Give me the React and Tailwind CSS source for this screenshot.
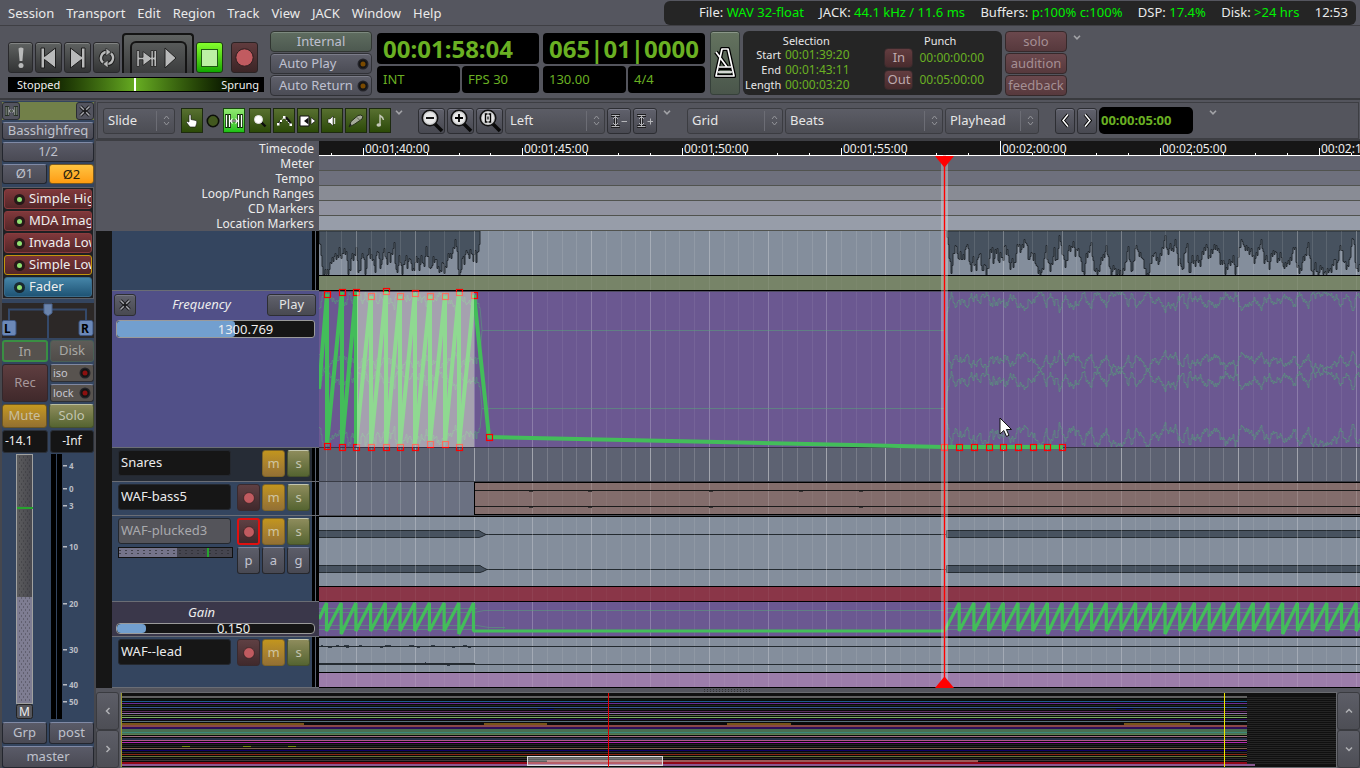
import React from "react";

/* ---------- timeline data ---------- */

const ORIGIN = 319;
const BEAT = 14.705;
const FIRST_BAR = 356.4;

const parse = (text, sx, ox) =>
  text.split(" ").map((p) => {
    const [x, y] = p.split(",").map(Number);
    return [ox + x / sx, (538 - y) / 133];
  });

const LEFT_WAVE = parse(
  "27,435 33,470 37,530 43,535 52,525 58,520 64,490 72,480 82,485 88,448 94,490 100,455 108,460 113,530 119,520 124,475 130,485 138,450 142,520 148,530 153,485 160,475 166,535 172,480 176,455 180,475 188,475 194,535 198,480 202,440 206,490 212,520 217,465 224,465 230,500 234,465 240,490 246,460 252,445 257,530 263,515 268,480 275,530 282,490 288,485 292,515 298,460 302,510 310,520 316,490 324,490 328,515 334,480 340,510 348,460 354,485 358,510 363,525 368,485 375,490 382,515 390,525 396,495 402,525 408,500 415,475 424,470 430,460 435,430 440,440 444,530 450,535 456,485 463,500 468,450 475,490 482,455 488,485 494,460 498,490 504,450 509,430",
  3,
  310
);

const RIGHT_WAVE = parse(
  "586,405 590,460 597,525 602,470 609,430 612,500 618,465 622,488 628,480 633,425 640,500 643,520 648,490 655,520 661,462 666,480 670,525 674,498 680,535 686,490 690,460 694,455 697,500 700,470 706,458 710,500 714,470 719,495 722,448 728,470 731,455 735,510 740,490 745,508 750,470 756,435 761,455 766,450 772,420 777,455 781,500 785,455 790,490 794,475 800,520 807,535 813,530 817,500 821,435 826,490 831,520 835,500 841,460 845,500 849,470 854,412 858,450 862,470 866,512 871,490 875,455 880,460 886,430 890,480 896,450 902,470 906,512 911,532 917,480 922,465 928,435 933,490 938,525 945,532 951,500 957,480 965,455 970,490 976,530 983,510 990,534 997,525 1004,534 1010,500 1016,450 1020,490 1026,525 1030,500 1036,433 1040,475 1048,470 1052,500 1060,535 1066,532 1072,490 1077,460 1082,480 1090,495 1097,460 1104,418 1110,465 1116,450 1122,460 1130,432 1135,500 1140,480 1146,535 1151,455 1157,445 1162,535 1168,485 1175,500 1180,485 1188,500 1193,475 1202,440 1208,490 1215,455 1222,450 1230,445 1236,500 1242,485 1247,530 1254,500 1262,500 1266,470 1270,538 1276,500 1283,445 1288,420 1292,460 1300,450 1310,465 1317,490 1323,470 1329,440 1334,435 1340,490 1346,485 1352,510 1358,475 1365,458 1372,500 1380,460 1385,520 1391,495 1398,500 1406,470 1413,445 1418,510 1424,530 1430,500 1437,480 1444,443 1450,500 1455,535 1461,505 1468,538 1475,510 1485,535 1492,515 1498,530 1506,485 1512,520 1518,460 1524,455 1530,500 1536,520 1542,490 1546,450 1552,412 1556,480 1560,530 1568,500",
  2.376,
  700
);

/* one column per pixel with a repeatable jitter, drawn as steps like a peak display */
const columns = (wave) => {
  const out = [];
  const last = wave[wave.length - 1][0];
  let i = 0;
  for (let x = Math.round(wave[0][0]); x <= last; x++) {
    while (i < wave.length - 2 && wave[i + 1][0] < x) i++;
    const [x0, v0] = wave[i];
    const [x1, v1] = wave[i + 1];
    const t = Math.min(1, Math.max(0, (x - x0) / (x1 - x0)));
    const jitter = (((x * 7919) % 101) / 101 - 0.5) * 0.22;
    out.push([x - ORIGIN, Math.min(1, Math.max(0.01, v0 + (v1 - v0) * t + jitter))]);
  }
  return out;
};

const LEFT_COLUMNS = columns(LEFT_WAVE);
const RIGHT_COLUMNS = columns(RIGHT_WAVE);

const edge = (cols, y) => cols.map(([x, v]) => `${x} ${Math.round(y(v)) + 0.5}h1`).join("L");

const beats = [];
for (let k = -2; k < 160; k++) {
  beats.push({ x: Math.floor(FIRST_BAR + k * BEAT) - ORIGIN + 0.5, bar: ((k % 4) + 4) % 4 === 0 });
}

function Grid({ h, y = 0, minor = 0.1, major = 0.26 }) {
  return (
    <g stroke="#fff" shapeRendering="crispEdges">
      {beats.map((b) => (
        <path key={b.x} d={`M${b.x} ${y}V${y + h}`} strokeOpacity={b.bar ? major : minor} />
      ))}
    </g>
  );
}

const Canvas = ({ h, className = "", children }) => (
  <svg width="100%" height={h} className={`block ${className}`} aria-hidden="true">
    {children}
  </svg>
);

/* ---------- lanes ---------- */

function WaveLane() {
  return (
    <div className="h-[60px] bg-[#848e9c]">
      <Canvas h={60}>
        <path d={`M0 0L${edge(LEFT_COLUMNS, (v) => 44 - v * 42)}L161 0Z`} fill="#47525f" stroke="#242b31" />
        <path d={`M628 0L${edge(RIGHT_COLUMNS, (v) => 44 - v * 42)}L3000 44V0Z`} fill="#47525f" stroke="#242b31" />
        <Grid h={44} minor={0.11} major={0.28} />
        <rect y="44" width="3000" height="16" fill="#778468" />
        <Grid h={14} y={45} minor={0.03} major={0.08} />
        <path d="M0 44.5H3000M0 59.5H3000" stroke="#000" />
      </Canvas>
    </div>
  );
}

const GHOSTS = [(v) => v * 22, (v) => 78 - v * 20, (v) => 79 + v * 22, (v) => 155 - v * 25];

const TOPS = [
  [327, 294], [342, 292], [356, 292], [371, 296], [386, 291], [400, 296],
  [415, 293], [430, 296], [445, 296], [459, 292], [474, 295],
];
const BOTTOMS = [
  [327, 446], [342, 447], [356, 447], [371, 447], [386, 447], [400, 447],
  [415, 447], [430, 444], [445, 444], [459, 447],
];
const TAIL = [[489, 437], [944, 447], [959, 447], [974, 447], [989, 447], [1003, 447], [1018, 447], [1033, 447], [1047, 447], [1062, 447]];

function FrequencyLane() {
  let d = "M0 98L8 3";
  BOTTOMS.forEach(([x, y], i) => {
    d += `L${x - ORIGIN} ${y - 293}L${TOPS[i + 1][0] - ORIGIN} ${TOPS[i + 1][1] - 291}`;
  });
  d += "L170 146L625 156H744";
  return (
    <div className="relative z-10 h-[157px] bg-[#6b5891]">
      <Canvas h={157} className="overflow-visible">
        <Grid h={157} minor={0.07} major={0.22} />
        <g fill="none" stroke="#56a878" strokeOpacity=".5">
          {GHOSTS.map((f, i) => (
            <g key={i}>
              <path d={`M${edge(LEFT_COLUMNS, f)}L163 ${i < 2 ? 39 : 117}`} />
              <path d={`M627 ${i < 2 ? 39 : 117}L${edge(RIGHT_COLUMNS, f)}`} />
            </g>
          ))}
          <path d="M163 39.5H626M163 117.5H626" />
        </g>
        <path d="M0 0.5H3000" stroke="#4e4a62" />
        <path d="M0 156.5H3000" stroke="#2a2a33" strokeOpacity=".8" />
        <path d={d} fill="none" stroke="#43bd5a" strokeWidth="4" strokeLinejoin="bevel" />
        <g fill="none" stroke="#f00" strokeWidth="1.2">
          {[...TOPS, ...BOTTOMS, ...TAIL].map(([x, y], i) => (
            <rect key={i} x={x - ORIGIN - 2.5} y={y - 291 - 2.5} width="6" height="6" />
          ))}
        </g>
        <rect x="38" y="1" width="117" height="155" fill="rgb(238,250,212)" fillOpacity=".45" />
      </Canvas>
    </div>
  );
}

function SnaresLane() {
  return (
    <div className="h-[34px] bg-[#5d6272]">
      <Canvas h={34}>
        <Grid h={33} minor={0.16} major={0.42} />
        <path d="M0 33.5H3000" stroke="#393c46" />
      </Canvas>
    </div>
  );
}

function BassLane() {
  return (
    <div className="h-[34px] bg-[#6b7182]">
      <Canvas h={34}>
        <Grid h={33} minor={0.16} major={0.42} />
        <rect x="155.5" y="0.5" width="3000" height="32" fill="#836d6c" stroke="#000" />
        <svg x="156" width="3000" height="32">
          <g transform="translate(-156 0)">
            <Grid h={31} y={1} minor={0.05} major={0.16} />
          </g>
        </svg>
        <path d="M156 8.5H3000M156 24.5H3000" stroke="#1b1b1b" />
        <path d="M210 9.5h4M269 9.5h4M210 25.5h4M269 25.5h4M390 9.5h4M390 25.5h4M480 9.5h4M540 9.5h4M540 25.5h4" stroke="#3a3434" />
        <path d="M0 33.5H3000" stroke="#4a4d55" />
      </Canvas>
    </div>
  );
}

function PluckedLane() {
  return (
    <div className="h-[86px] bg-[#848e9c]">
      <Canvas h={86}>
        <g fill="#47525f" stroke="#242b31">
          <path d="M-2 14.5H160L163 16.5L167 18.5L163 20.5L160 21.5H-2Z" />
          <path d="M-2 49.5H161L164 51.5L168 53.5L164 55.5L161 56.5H-2Z" />
          <path d="M627.5 14.5H3000V21.5H627.5Z" />
          <path d="M627.5 49.5H3000V56.5H627.5Z" />
          <path d="M166 18.5H628M167 53.5H628" />
        </g>
        <Grid h={70} minor={0.09} major={0.25} />
        <rect y="70" width="3000" height="16" fill="#8a3648" />
        <Grid h={14} y={71} minor={0.03} major={0.06} />
        <path d="M0 0.5H3000M0 70.5H3000M0 85.5H3000" stroke="#000" />
      </Canvas>
    </div>
  );
}

function GainLane() {
  let d = "M0 17L7.5 1";
  for (let i = 0; i < 10; i++) {
    const x = 7.5 + i * BEAT;
    d += `L${x} ${i % 8 === 1 || i === 9 ? 32 : 29}L${x + BEAT} 1`;
  }
  d += "L154.5 29H625.5";
  for (let i = 0; i < 90; i++) {
    const x = 625.5 + i * BEAT;
    d += `L${x} ${i % 8 === 7 ? 32 : 29}L${x + BEAT} 1`;
  }
  return (
    <div className="h-[35px] bg-[#6b5891]">
      <Canvas h={35}>
        <Grid h={35} minor={0.07} major={0.22} />
        <g stroke="#56a878" strokeOpacity=".5" fill="none">
          <path d="M0 6.5H158M0 10.5H155L165 8.5H626M0 23.5H158L170 25.5H186M0 27.5H155M628 6.5H3000M628 10.5H3000M628 23.5H3000M628 27.5H3000" />
        </g>
        <path d={d} fill="none" stroke="#43bd5a" strokeWidth="3.2" strokeLinejoin="bevel" />
        <path d="M0 34.5H3000" stroke="#2b2b30" />
      </Canvas>
    </div>
  );
}

function LeadLane() {
  return (
    <div className="h-[51px] bg-[#848e9c]">
      <Canvas h={51}>
        <Grid h={35} minor={0.09} major={0.25} />
        <path d="M0 9.5H3000M0 26.5H156M0 27.5H3000" stroke="#242b31" />
        <path d="M2 8.5h2M9 10.5h4M17 8.5h3M25 8.5h5M27 10.5h3M40 8.5h3M61 10.5h3M66 8.5h6M90 8.5h5M98 10.5h3M112 8.5h4M133 10.5h3M144 8.5h4M149 10.5h3M106 25.5h1M128 28.5h3" stroke="#2f3944" />
        <rect y="35" width="3000" height="16" fill="#9c7daa" />
        <Grid h={14} y={36} minor={0.05} major={0.12} />
        <path d="M0 0.5H3000M0 35.5H3000M0 50.5H3000" stroke="#000" />
      </Canvas>
    </div>
  );
}

/* ---------- ruler ---------- */

const RULER_LABELS = ["00:01:40:00", "00:01:45:00", "00:01:50:00", "00:01:55:00", "00:02:00:00", "00:02:05:00", "00:02:10:00"];

function Ruler() {
  const ticks = [];
  for (let i = -1; i < 60; i++) ticks.push(i);
  return (
    <div className="relative h-[15px] overflow-hidden bg-[#161616]">
      <Canvas h={15}>
        <g stroke="#fff" shapeRendering="crispEdges">
          {ticks.map((i) => {
            const x = Math.round(44 + i * 31.86) + 0.5;
            return <path key={i} d={`M${x} ${i % 5 === 0 ? (i === 20 ? 0 : 7) : 12}V15`} />;
          })}
          <path d="M0 14.5H3000" />
        </g>
      </Canvas>
      {RULER_LABELS.map((t, i) => (
        <span key={t} className="absolute top-0 text-xs leading-[15px] text-[#eee]" style={{ left: Math.round(46 + i * 159.3) }}>
          {t}
        </span>
      ))}
    </div>
  );
}

/* ---------- small controls ---------- */

const BEVEL = "rounded-[3px] border border-[#2d2e33] bg-linear-to-b from-[#60616c] to-[#484951] shadow-[inset_0_1px_0_#777885]";
const STRIP = "flex items-center justify-center overflow-hidden whitespace-nowrap rounded-[3px] border border-[#23262e] border-t-[#808aa6] bg-linear-to-b from-[#5a5b68] to-[#4a4a54] text-[13px] text-[#bfc1cc]";
const TRANSPORT = "flex h-[31px] items-center justify-center rounded-[3px] border border-[#29292c] bg-linear-to-b from-[#5f6261] to-[#333435] shadow-[inset_0_1px_0_#828483]";
const TOOL = "flex h-[25px] w-[22px] items-center justify-center border border-[#1d2a10] bg-linear-to-b from-[#587030] to-[#2c4a07]";

function Led({ ring = "#151515", core = "#7a4a00" }) {
  return (
    <svg width="12" height="12" viewBox="0 0 12 12" className="shrink-0" aria-hidden="true">
      <circle cx="6" cy="6" r="5.5" fill="#24242a" />
      <circle cx="6" cy="6" r="4.2" fill={ring} />
      <circle cx="6" cy="6" r="2.5" fill={core} />
    </svg>
  );
}

function Drop() {
  return (
    <button aria-label="More" className="flex h-3 w-3 items-center justify-center">
      <svg width="8" height="5" viewBox="0 0 8 5" fill="none" stroke="#a3a4a8" strokeWidth="1.6"><path d="M1 .8L4 3.8L7 .8" /></svg>
    </button>
  );
}

function Combo({ label, value, className }) {
  return (
    <div className={`grid h-[26px] items-stretch ${className}`}>
      <select aria-label={label} className="col-start-1 row-start-1 w-full appearance-none rounded-[3px] border border-[#3b3c41] bg-linear-to-b from-[#5c5d66] to-[#4c4d54] pl-1 text-[13px] text-[#e6e6e6]">
        <option>{value}</option>
      </select>
      <span className="pointer-events-none col-start-1 row-start-1 my-[3px] flex w-[19px] items-center justify-center justify-self-end border-l border-[#6c6d75]">
        <svg width="7" height="11" viewBox="0 0 7 11" fill="none" stroke="#94959a"><path d="M1 4L3.500 1L6 4M1 7L3.500 10L6 7" /></svg>
      </span>
    </div>
  );
}

/* ---------- header ---------- */

const Stat = ({ name, value }) => (
  <span className="whitespace-nowrap">
    {name} <span className="text-[#00f000]">{value}</span>
  </span>
);

function MenuBar() {
  return (
    <header className="flex h-[26px] items-center justify-between border-b border-[#3f3f44] bg-[#55565f] pr-1">
      <nav className="flex gap-3 pl-2 text-[13px] leading-6 text-[#eaeaea]">
        {["Session", "Transport", "Edit", "Region", "Track", "View", "JACK", "Window", "Help"].map((m) => (
          <button key={m}>{m}</button>
        ))}
      </nav>
      <div className="flex h-6 w-[692px] items-center justify-between rounded-md bg-[#252525] pr-2 pl-[35px] text-[13px] text-[#eaeaea]">
        <Stat name="File:" value="WAV 32-float" />
        <Stat name="JACK:" value="44.1 kHz / 11.6 ms" />
        <Stat name="Buffers:" value="p:100% c:100%" />
        <Stat name="DSP:" value="17.4%" />
        <Stat name="Disk:" value=">24 hrs" />
        <span>12:53</span>
      </div>
    </header>
  );
}

function BigClock({ time, left, right, label }) {
  return (
    <div className="flex w-[162px] flex-col gap-0.5 text-[#6ab023]" aria-label={label}>
      <div className="flex h-[31px] items-center rounded-sm bg-black pl-1.5 text-2xl font-bold">{time}</div>
      <div className="flex h-[27px] gap-0.5 text-[13px]">
        <div className="flex flex-1 items-center rounded-sm bg-black pl-1.5">{left}</div>
        <div className="flex w-[77px] items-center rounded-sm bg-black pl-1.5">{right}</div>
      </div>
    </div>
  );
}

function Transport() {
  const mini = "flex h-[21px] w-[102px] items-center rounded-sm border border-[#303136] bg-linear-to-b from-[#5f606b] to-[#4b4c55] pl-2 pr-0.5 text-[13px] text-[#bfc0d0] shadow-[inset_0_1px_0_#7b7c88]";
  const red = "flex items-center justify-center rounded-sm border border-[#36292b] bg-linear-to-b text-[13px]";
  return (
    <section aria-label="Transport" className="flex h-[74px] items-start border-b-2 border-[#393a3e] bg-[#54555d] pl-2 pt-[5px]">
      <div className="flex w-[256px] flex-col gap-1 pt-0.5">
        <div className="flex h-10 items-end gap-0.5">
          <button aria-label="MIDI panic" className={`${TRANSPORT} w-[25px]`}>
            <svg width="8" height="22" viewBox="0 0 8 22" fill="#b9baba"><path d="M1.500 1.500Q4-.5 6.500 1.500L5.400 14H2.600Z" /><circle cx="4" cy="18.500" r="2.500" /></svg>
          </button>
          <button aria-label="Go to start" className={`${TRANSPORT} w-[27px]`}>
            <svg width="17" height="22" viewBox="0 0 17 22" fill="#b9baba" stroke="#1f1f1f"><path d="M1 1H4.500V9.500L15.500 1V21L4.500 12.500V21H1Z" /></svg>
          </button>
          <button aria-label="Go to end" className={`${TRANSPORT} w-[27px]`}>
            <svg width="17" height="22" viewBox="0 0 17 22" fill="#b9baba" stroke="#1f1f1f"><path d="M16 1H12.500V9.500L1.500 1V21L12.500 12.500V21H16Z" /></svg>
          </button>
          <button aria-label="Loop" className={`${TRANSPORT} w-[27px]`}>
            <svg width="18" height="20" viewBox="0 0 18 20" fill="none">
              <g stroke="#1f1f1f" strokeWidth="4.400"><path d="M5 14.500A6 6 0 0 1 9 4M13 5.500A6 6 0 0 1 9 16" /></g>
              <g stroke="#b9baba" strokeWidth="2.400"><path d="M5 14.500A6 6 0 0 1 9 4M13 5.500A6 6 0 0 1 9 16" /></g>
              <path d="M8 0L13 4L8 8ZM10 12L5 16L10 20Z" fill="#b9baba" stroke="#1f1f1f" strokeWidth=".7" />
            </svg>
          </button>
          <div className="flex h-10 w-[72px] items-end justify-center rounded-t-sm border-2 border-b-0 border-[#141414] bg-linear-to-b from-[#5f6261] to-[#3c3d3e]">
            <div className="flex h-8 w-[57px] items-center justify-between rounded-t-md border-2 border-b-0 border-[#141414] pr-2 pl-1">
              <button aria-label="Play selection">
                <svg width="21" height="17" viewBox="0 0 21 17" fill="#b9baba" stroke="#1f1f1f" strokeWidth=".8"><path d="M.8 .5H3.300V7.300H7V1.500L15 7.500V.5H17.300V7.300H18V.5H20.500V16.500H18V9.700H17.300V16.500H15V9.500L7 15.500V9.700H3.300V16.500H.8Z" /></svg>
              </button>
              <button aria-label="Play">
                <svg width="13" height="22" viewBox="0 0 13 22" fill="#b9baba" stroke="#1f1f1f"><path d="M1 1L12 11L1 21Z" /></svg>
              </button>
            </div>
          </div>
          <button aria-label="Stop" className="flex h-[31px] w-[27px] items-center justify-center rounded-[3px] border border-[#1b3a10] bg-linear-to-b from-[#83ff2c] to-[#0aa800]">
            <svg width="17" height="18" viewBox="0 0 17 18"><rect x=".5" y=".5" width="16" height="17" fill="#bdf0a4" stroke="#1e5a12" /></svg>
          </button>
          <button aria-label="Record" className="ml-1.5 flex h-[31px] w-[27px] items-center justify-center rounded-[3px] border border-[#2a2223] bg-linear-to-b from-[#613c3e] to-[#3c2526]">
            <svg width="19" height="19" viewBox="0 0 19 19"><circle cx="9.500" cy="9.500" r="8.700" fill="#c15b60" stroke="#2a1c1d" /></svg>
          </button>
        </div>
        <div className="grid h-[15px] grid-cols-2 items-center border border-black bg-linear-to-r from-black via-[#67ad22] to-black text-[11px] leading-[13px] text-[#f0f0f0]">
          <span className="h-full border-r-2 border-white pl-2">Stopped</span>
          <span className="pr-1 text-right">Sprung</span>
        </div>
      </div>

      <div className="ml-1.5 flex flex-col gap-px">
        <button className="flex h-[21px] w-[102px] items-center justify-center rounded-sm border border-[#303531] bg-linear-to-b from-[#5f6d60] to-[#4d5950] text-[13px] text-[#bfc0d0] shadow-[inset_0_1px_0_#7d8a7f]">Internal</button>
        <button className={mini}><span className="flex-1 text-left">Auto Play</span><Led /></button>
        <button className={mini}><span className="flex-1 text-left">Auto Return</span><Led /></button>
      </div>

      <div className="ml-[5px] flex gap-1 pt-0.5">
        <BigClock label="Primary clock" time="00:01:58:04" left="INT" right="FPS 30" />
        <BigClock label="Secondary clock" time="065|01|0000" left="130.00" right="4/4" />
      </div>

      <button aria-label="Metronome" className="ml-[5px] flex h-16 w-[30px] items-center justify-center rounded-[3px] border border-[#36403a] bg-linear-to-b from-[#64735f] to-[#4a564b] shadow-[inset_0_1px_0_#8a9788]">
        <svg width="22" height="32" viewBox="0 0 22 32" fill="none" strokeLinejoin="round">
          <g stroke="#000" strokeWidth="4.200"><path d="M2 29L8 2H14L20 29ZM5 21H17M2 5L13 20" /></g>
          <g stroke="#fff" strokeWidth="1.700"><path d="M2 29L8 2H14L20 29ZM5 20H17M4 25H18M2 5L13 20" /></g>
        </svg>
      </button>

      <div className="ml-[3px] flex h-16 w-[259px] rounded-md bg-[#252525] pl-0.5 pr-[18px] text-xs text-[#e8e8e8]">
        <div className="flex flex-col">
          <div className="pl-[18px] pt-[3px] text-center text-[11px] leading-[13px]">Selection</div>
          <dl className="grid grid-cols-[36px_auto] gap-x-1 leading-[15px]">
            {[["Start", "00:01:39:20"], ["End", "00:01:43:11"], ["Length", "00:00:03:20"]].map(([k, v]) => (
              <React.Fragment key={k}>
                <dt className="text-right text-[11px]">{k}</dt>
                <dd className="text-xs leading-[15px] text-[#6ab023]">{v}</dd>
              </React.Fragment>
            ))}
          </dl>
        </div>
        <div className="ml-auto flex flex-col">
          <div className="pl-3 pt-[3px] text-center text-[11px] leading-[13px]">Punch</div>
          {[["In", "00:00:00:00"], ["Out", "00:05:00:00"]].map(([k, v]) => (
            <div key={k} className="flex h-[22px] items-center gap-1.5">
              <button className={`${red} h-5 w-[29px] from-[#633d40] to-[#482b2d] text-[#bfaaae]`}>{k}</button>
              <span className="text-[#6ab023]">{v}</span>
            </div>
          ))}
        </div>
      </div>

      <div className="ml-[3px] flex flex-col gap-px">
        {["solo", "audition", "feedback"].map((t) => (
          <button key={t} className={`${red} h-[21px] w-[62px] from-[#6b484d] to-[#57393d] text-[#a58f94]`}>{t}</button>
        ))}
      </div>
      <span className="ml-1"><Drop /></span>
    </section>
  );
}

function MagIcon({ children }) {
  return (
    <svg width="24" height="24" viewBox="0 0 24 24" fill="none">
      <path d="M14 14L22 22" stroke="#0a0a0a" strokeWidth="3.600" />
      <circle cx="10" cy="9" r="7.700" fill="#c9cacb" stroke="#111" strokeWidth="1.600" />
      <circle cx="10" cy="9" r="5.800" fill="#e8e8e8" />
      <g stroke="#000" strokeWidth="1.800">{children}</g>
    </svg>
  );
}

function TrackHeightIcon({ plus }) {
  return (
    <svg width="18" height="14" viewBox="0 0 18 14" fill="none" stroke="#1d1d1f" strokeWidth="2.800">
      <path d="M1 1.500H10M1 12.500H10M5.500 2V12" />
      <g stroke="#b4b5b9" strokeWidth="1"><path d="M1.500 1.500H9.500M1.500 12.500H9.500M5.500 2V12M3 5L5.500 2.500L8 5M3 9L5.500 11.500L8 9M11.500 7.500H17" />{plus && <path d="M14.500 4.500V10.500" />}</g>
    </svg>
  );
}

function RangeIcon({ color = "#fff", width = 18, height = 14 }) {
  return (
    <svg width={width} height={height} viewBox="0 0 18 14" fill="none" className="shrink-0">
      <path d="M1.500 0V14M4.500 0V14M13.500 0V14M16.500 0V14M4 7H14" stroke="#0a1a05" strokeWidth="2.600" />
      <path d="M1.500 1V13M4.500 1V13M13.500 1V13M16.500 1V13M5 7H13M7.500 4.500L5.500 7L7.500 9.500M10.500 4.500L12.500 7L10.500 9.500" stroke={color} strokeWidth="1.200" />
    </svg>
  );
}

function EditBar() {
  return (
    <section aria-label="Edit tools" className="m-px mb-0 flex h-[37px] items-center border border-[#3d3e43] pl-[5px]">
      <Combo label="Edit mode" value="Slide" className="w-[72px]" />
      <div className="ml-1.5 flex items-center gap-0.5">
        <button aria-label="Grab tool" className={TOOL}>
          <svg width="12" height="14" viewBox="0 0 12 14" fill="#fff"><path d="M3 1Q4 0 5 1V5.500L10 6.500Q11 7 10.800 9L9.500 13H4L.5 8.500Q1 7 3 8Z" stroke="#111" strokeWidth=".6" /></svg>
        </button>
        <button aria-label="Smart mode" className="flex w-4 justify-center">
          <svg width="14" height="14" viewBox="0 0 14 14"><circle cx="7" cy="7" r="5.700" fill="#42581f" stroke="#0c0f08" strokeWidth="1.600" /></svg>
        </button>
        <button aria-label="Range tool" className="mr-0.5 flex h-[25px] w-[22px] items-center justify-center border border-[#174a0c] bg-linear-to-b from-[#8ee86f] to-[#19c212]"><RangeIcon /></button>
        <button aria-label="Zoom tool" className={TOOL}>
          <svg width="14" height="14" viewBox="0 0 14 14"><path d="M7 7L12.500 12.500" stroke="#0d0d0d" strokeWidth="2.400" /><circle cx="5.500" cy="5.500" r="4" fill="#fff" stroke="#e0e0e0" /></svg>
        </button>
        <button aria-label="Gain tool" className={TOOL}>
          <svg width="17" height="12" viewBox="0 0 17 12" fill="none"><path d="M2 9L5 6M8.500 2.500L10.500 3L13 6L15 10" stroke="#111" strokeWidth="2.400" /><path d="M2 9L8 2.500L14.500 9.500" stroke="#fff" strokeDasharray="2 1" /><path d="M1 8h2.500v2.500H1zM7 1h2.500v2.500H7zM13.500 8.500h2.500v2.500h-2.500zM4 5h2v2H4z" fill="#fff" /></svg>
        </button>
        <button aria-label="Stretch tool" className={TOOL}>
          <svg width="18" height="12" viewBox="0 0 18 12"><path d="M1 1H10V11H1Z" fill="#fff" stroke="#111" /><path d="M5 6L9.500 2.500V9.500Z" fill="#111" /><path d="M16.500 6L12 2.500V9.500Z" fill="#fff" stroke="#111" strokeWidth=".7" /></svg>
        </button>
        <button aria-label="Audition tool" className={TOOL}>
          <svg width="10" height="12" viewBox="0 0 10 12" fill="#fff"><path d="M1 4H3L6 1V11L3 8H1Z" stroke="#111" strokeWidth=".5" /><path d="M7.500 3V9" stroke="#ddd" strokeWidth="1.400" /></svg>
        </button>
        <button aria-label="Draw tool" className={TOOL}>
          <svg width="16" height="14" viewBox="0 0 16 14"><path d="M1 13L3 7.500L10 1.500Q13 0 15 2.500L14 5L6 10.500Z" fill="#a6aa9a" stroke="#26301a" /><path d="M1 13L3.500 11L2.500 9.500Z" fill="#111" /><path d="M9 3.500L12 6.500" stroke="#5a5f50" /></svg>
        </button>
        <button aria-label="Edit notes" className={TOOL}>
          <svg width="9" height="14" viewBox="0 0 9 14"><path d="M4 11V1.500Q7 3 7.500 6" fill="none" stroke="#c4c8b8" strokeWidth="1.400" /><ellipse cx="2.800" cy="11" rx="2.300" ry="1.800" fill="#c4c8b8" /></svg>
        </button>
      </div>
      <span className="mb-4 ml-0.5"><Drop /></span>

      <div className="ml-[13px] flex items-center gap-0.5">
        <button aria-label="Zoom out" className={`${BEVEL} flex h-[26px] w-[27px] items-center justify-center`}><MagIcon><path d="M6 9H14" /></MagIcon></button>
        <button aria-label="Zoom in" className={`${BEVEL} flex h-[26px] w-[27px] items-center justify-center`}><MagIcon><path d="M6 9H14M10 5V13" /></MagIcon></button>
        <button aria-label="Zoom to session" className={`${BEVEL} flex h-[26px] w-[27px] items-center justify-center`}><MagIcon><path d="M9.500 5H7.500V13H9.500M10.500 5H12.500V13H10.500" strokeWidth="1.400" /><path d="M10 7.500V10.500" strokeWidth="1.200" /></MagIcon></button>
        <Combo label="Zoom focus" value="Left" className="w-[100px]" />
        <button aria-label="Shrink tracks" className={`${BEVEL} flex h-[26px] w-6 items-center justify-center`}><TrackHeightIcon /></button>
        <button aria-label="Expand tracks" className={`${BEVEL} flex h-[26px] w-6 items-center justify-center`}><TrackHeightIcon plus /></button>
      </div>
      <span className="mb-4 ml-1"><Drop /></span>

      <div className="ml-3.5 flex items-center gap-0.5">
        <Combo label="Snap mode" value="Grid" className="w-[96px]" />
        <Combo label="Snap to" value="Beats" className="w-[158px]" />
        <Combo label="Edit point" value="Playhead" className="w-[94px]" />
      </div>
      <div className="ml-4 flex items-center gap-0.5">
        <button aria-label="Nudge back" className={`${BEVEL} flex h-[26px] w-5 items-center justify-center`}>
          <svg width="9" height="15" viewBox="0 0 9 15" fill="none"><path d="M7 1.500L2 7.500L7 13.500" stroke="#000" strokeWidth="3.400" /><path d="M7 1.500L2 7.500L7 13.500" stroke="#fff" strokeWidth="1.500" /></svg>
        </button>
        <button aria-label="Nudge forward" className={`${BEVEL} flex h-[26px] w-5 items-center justify-center`}>
          <svg width="9" height="15" viewBox="0 0 9 15" fill="none"><path d="M2 1.500L7 7.500L2 13.500" stroke="#000" strokeWidth="3.400" /><path d="M2 1.500L7 7.500L2 13.500" stroke="#fff" strokeWidth="1.500" /></svg>
        </button>
        <div className="flex h-[27px] w-[94px] items-center rounded-[5px] bg-black pl-0.5 text-[13px] font-bold text-[#6ab023]">00:00:05:00</div>
      </div>
      <span className="mb-4 ml-3.5"><Drop /></span>
    </section>
  );
}

/* ---------- mixer strip ---------- */

const SCALE = [["4", 466], ["0", 489], ["3", 506], ["10", 547], ["20", 604], ["30", 650], ["40", 685], ["50", 702]];

const CrossIcon = ({ size = 12 }) => (
  <svg width={size} height={size} viewBox="0 0 12 12" fill="none">
    <path d="M1.500 1.500L10.500 10.500M10.500 1.500L1.500 10.500" stroke="#1c1c1e" strokeWidth="3.400" />
    <path d="M1.500 1.500L4.800 4.800M7.200 7.200L10.500 10.500M10.500 1.500L7.200 4.800M4.800 7.200L1.500 10.500" stroke="#a9aab0" strokeWidth="1.400" />
  </svg>
);

function Processor({ name, kind }) {
  const look =
    kind === "fader"
      ? "border-[#3a6b8a] bg-linear-to-b from-[#4585a8] to-[#1f5475]"
      : kind === "selected"
      ? "border-[#c2950c] bg-linear-to-b from-[#7a3436] to-[#532628]"
      : "border-[#8a3c3e] bg-linear-to-b from-[#80383b] to-[#542628]";
  return (
    <button className={`flex h-5 w-full shrink-0 items-center gap-[3px] overflow-hidden rounded-[3px] border pl-2 text-[13px] whitespace-nowrap text-[#eee] ${look}`}>
      <svg width="13" height="13" viewBox="0 0 13 13" className="shrink-0"><circle cx="6.500" cy="6.500" r="5.500" fill="#111" fillOpacity=".75" /><circle cx="6.500" cy="6.500" r="2.500" fill="#8fe070" /></svg>
      {name}
    </button>
  );
}

function MixerStrip() {
  const pair = "flex gap-0.5";
  return (
    <aside aria-label="Mixer strip" className="flex w-24 shrink-0 flex-col border-r-2 border-l-2 border-[#46474d] bg-[#34455f] pt-px text-[13px]">
      <div className="flex h-[18px] justify-between bg-[#728049]">
        <button aria-label="Strip width" className="flex w-[18px] items-center justify-center rounded-[3px] border border-[#2a2c33] bg-[#53545f]"><RangeIcon color="#b4b5ba" width={13} height={10} /></button>
        <button aria-label="Close strip" className="flex w-[18px] items-center justify-center rounded-[3px] border border-[#2a2c33] bg-[#53545f]"><CrossIcon /></button>
      </div>
      <button className={`${STRIP} mt-0.5 h-[18px]`}>Basshighfreq</button>
      <button className={`${STRIP} mt-0.5 h-5`}>1/2</button>
      <div className={`${pair} mt-0.5 h-5`}>
        <button className={`${STRIP} flex-1`}>Ø1</button>
        <button className="flex-1 rounded-[3px] border border-[#7a5a20] bg-linear-to-b from-[#ffc43f] to-[#ff9c0e] text-[#26200e]">Ø2</button>
      </div>
      <div className="mt-[3px] flex h-28 flex-col gap-0.5 border border-[#5b5f66] bg-[#1f2023] p-px">
        <Processor name="Simple Hig" />
        <Processor name="MDA Imag" />
        <Processor name="Invada Low" />
        <Processor name="Simple Low" kind="selected" />
        <Processor name="Fader" kind="fader" />
      </div>
      <svg width="92" height="35" viewBox="0 0 92 35" className="mt-1 block" role="img" aria-label="Panner">
        <rect width="92" height="35" fill="#2c2827" />
        <path d="M46 12V35M7 18V6.500H84V18" fill="none" stroke="#34496a" strokeWidth="2" />
        <path d="M42 1H50V10L46 13L42 10Z" fill="#6a84ad" stroke="#4a6490" />
        <rect x="0" y="17.500" width="14" height="15" rx="2" fill="#6b88b8" stroke="#3d5580" />
        <rect x="77" y="17.500" width="14" height="15" rx="2" fill="#6b88b8" stroke="#3d5580" />
        <text x="2" y="30" fontSize="12" fontWeight="bold" fill="#000">L</text>
        <text x="79" y="30" fontSize="12" fontWeight="bold" fill="#000">R</text>
      </svg>
      <div className={`${pair} mt-0.5 h-[22px]`}>
        <button className="flex-1 rounded-[3px] border-2 border-[#3a8f43] bg-[#56524e] text-[#a9a8a4]">In</button>
        <button className="flex-1 rounded-[3px] border border-[#4a5f56] bg-linear-to-b from-[#5e5c58] to-[#504c49] text-[#a9a8a4]">Disk</button>
      </div>
      <div className={`${pair} mt-0.5 h-[38px]`}>
        <button className="flex-1 rounded-[3px] border border-[#33272b] bg-linear-to-b from-[#5f3e40] to-[#40292b] text-[#a7979a]">Rec</button>
        <div className="flex flex-1 flex-col justify-between text-[11px]">
          {["iso", "lock"].map((t) => (
            <button key={t} className="flex h-[18px] items-center justify-between rounded-[3px] border border-[#2d2e33] border-t-[#8088a0] bg-[#58534f] pr-0.5 pl-0.5 text-[#c6c6d0]">{t}<Led core="#8c1010" /></button>
          ))}
        </div>
      </div>
      <div className={`${pair} mt-0.5 h-6`}>
        <button className="flex-1 rounded-[3px] border border-[#6b5522] bg-linear-to-b from-[#c5981f] to-[#93702f] text-[#c9bf9f]">Mute</button>
        <button className="flex-1 rounded-[3px] border border-[#46502c] border-t-[#b9bda0] bg-linear-to-b from-[#8e8c5c] to-[#556431] text-[#c3c5b0]">Solo</button>
      </div>
      <div className={`${pair} mt-0.5 h-[23px] text-xs`}>
        <input aria-label="Gain" defaultValue="-14.1" className="w-0 flex-1 rounded-[3px] border border-[#2a2f38] bg-[#151515] pb-0.5 pl-0.5 text-[#eee]" />
        <button className="flex-1 rounded-[3px] border border-[#2a2f38] bg-[#151515] pb-0.5 text-[#eee]">-Inf</button>
      </div>
      <svg width="92" height="266" viewBox="0 453 92 266" className="block" role="img" aria-label="Fader and level meter">
        <defs>
          <pattern id="dots" width="8" height="6" patternUnits="userSpaceOnUse">
            <path d="M1 1h1M3 4h1M5 1h1M7 4h1" stroke="#2a2a30" strokeOpacity=".7" />
          </pattern>
          <linearGradient id="slot" x1="0" x2="1"><stop offset="0" stopColor="#5c5c5e" /><stop offset="1" stopColor="#48484e" /></linearGradient>
        </defs>
        <rect x="14.500" y="454.500" width="16" height="249" fill="url(#slot)" stroke="#a0a1a0" />
        <rect x="15" y="597" width="15" height="106" fill="#7e7d92" />
        <rect x="16" y="456" width="13" height="246" fill="url(#dots)" />
        <rect x="15" y="507" width="16" height="2" fill="#27a52e" />
        <rect x="49" y="454" width="11" height="265" fill="#000" />
        <path d="M54.500 454V719" stroke="#34455f" />
        <g fontSize="8" fontWeight="bold" fill="#b9bcc4">
          {SCALE.map(([t, y]) => (
            <g key={t}>
              <rect x="61" y={y - 1} width="4" height="1.500" />
              <text x="67" y={y + 3}>{t}</text>
            </g>
          ))}
        </g>
        <rect x="14.500" y="704.500" width="16" height="14" rx="2" fill="#55565c" stroke="#222" />
        <text x="17" y="716" fontSize="12" fill="#eee">M</text>
      </svg>
      <div className={`${pair} mt-[3px] h-[22px]`}>
        <button className={`${STRIP} flex-1`}>Grp</button>
        <button className={`${STRIP} flex-1`}>post</button>
      </div>
      <button className={`${STRIP} mt-0.5 h-[22px]`}>master</button>
    </aside>
  );
}

/* ---------- track headers ---------- */

function Btn({ kind, children, label }) {
  const looks = {
    rec: "border-[#3a2a2e] bg-linear-to-b from-[#5f4043] to-[#40292c]",
    armed: "border-2 border-[#e01010] bg-linear-to-b from-[#5f4043] to-[#40292c]",
    mute: "border-[#7d6427] bg-linear-to-b from-[#c2951d] to-[#937034] text-[#cfc4a0]",
    solo: "border-[#46502c] border-t-[#c3c6ae] bg-linear-to-b from-[#8e8c5c] to-[#556431] text-[#c3c5b0]",
    grey: "border-[#26272c] border-t-[#7c86a0] bg-linear-to-b from-[#5c5d69] to-[#484953] text-[#c3c4d0]",
  };
  return (
    <button aria-label={label} className={`flex h-[27px] w-[23px] items-center justify-center rounded-[3px] border text-[13px] ${looks[kind]}`}>
      {children || <svg width="12" height="12" viewBox="0 0 12 12"><circle cx="6" cy="6" r="5.400" fill="#c15b60" stroke="#2a1c1d" strokeWidth=".6" /></svg>}
    </button>
  );
}

function TrackHeader({ name, height, rec, dim, bg = "bg-[#34455f]", children }) {
  return (
    <div className={`flex border-b border-[#6a6d75] ${height} ${bg}`}>
      <div className="flex flex-1 flex-col gap-0.5 pt-0.5 pl-1.5">
        {name && (
          <div className="flex items-start gap-0.5">
            <input
              aria-label="Track name"
              defaultValue={name}
              className={`mr-1 h-[26px] w-[113px] rounded-[3px] border border-[#24282f] px-0.5 pb-0.5 text-[13px] ${dim ? "bg-[#54545a] text-[#a9a9ad]" : "bg-[#161616] text-[#ececec]"}`}
            />
            {rec ? <Btn kind={rec} label="Record arm" /> : <span className="w-[23px]" />}
            <Btn kind="mute">m</Btn>
            <Btn kind="solo">s</Btn>
          </div>
        )}
        {children}
      </div>
      <div className="flex w-[7px] justify-center bg-black"><span className="w-px bg-[#5b6472]" /></div>
    </div>
  );
}

function Headers() {
  return (
    <div className="flex">
      <div className="w-4 shrink-0 bg-[#161616]" />
      <div className="min-w-0 flex-1">
        <TrackHeader height="h-[60px]" />
        <div className="flex h-[157px] flex-col gap-[3px] border-b border-[#6a6d75] bg-[#515088] pt-0.5">
          <div className="flex h-6 items-center justify-between pr-[3px] pl-0.5">
            <button aria-label="Hide lane" className={`${BEVEL} flex h-[22px] w-[22px] items-center justify-center`}><CrossIcon /></button>
            <span className="text-[13px] text-[#ececec] italic">Frequency</span>
            <button className={`${BEVEL} h-[22px] w-[49px] text-[13px] text-[#e4e4e4]`}>Play</button>
          </div>
          <div className="mx-1 grid h-[18px] items-center rounded-[3px] border border-[#9a9a9a] bg-[#151515] text-center text-[13px] leading-4 text-[#eee]">
            <div className="col-start-1 row-start-1 h-full w-3/5 rounded-[3px] bg-[#729fcf]" />
            <div className="col-start-1 row-start-1 pl-[60px]">1300.769</div>
          </div>
        </div>
        <TrackHeader name="Snares" height="h-[34px]" bg="bg-[#262c36]" />
        <TrackHeader name="WAF-bass5" height="h-[34px]" rec="rec" />
        <TrackHeader name="WAF-plucked3" height="h-[86px]" rec="armed" dim>
          <div className="flex items-start gap-0.5">
            <svg width="115" height="11" viewBox="0 0 115 11" className="mr-0.5 shrink-0" role="img" aria-label="Track gain">
              <defs>
                <pattern id="knurl" width="6" height="5" patternUnits="userSpaceOnUse"><path d="M1 1.500h2M1 3.500h2" stroke="#2b2b30" strokeOpacity=".7" /></pattern>
              </defs>
              <rect width="115" height="11" fill="#111" />
              <rect x="1" y="1" width="58" height="9" fill="#75748a" />
              <rect x="59" y="1" width="55" height="9" fill="#45454f" />
              <rect x="1" y="3" width="113" height="5" fill="url(#knurl)" />
              <rect x="89" y="1" width="2" height="9" fill="#27a52e" />
            </svg>
            <Btn kind="grey">p</Btn>
            <Btn kind="grey">a</Btn>
            <Btn kind="grey">g</Btn>
          </div>
        </TrackHeader>
        <div className="flex h-[35px] flex-col border-b border-[#6a6d75] bg-[#3a374a] px-1">
          <span className="h-[21px] pr-7 text-center text-[13px] leading-5 text-[#ececec] italic">Gain</span>
          <div className="grid h-[11px] items-center overflow-hidden rounded-sm border border-[#9a9a9a] bg-[#151515] text-center text-[13px] leading-[9px] text-[#eee]">
            <div className="col-start-1 row-start-1 h-[9px] w-[29px] rounded-sm bg-[#729fcf]" />
            <div className="col-start-1 row-start-1 pl-9">0.150</div>
          </div>
        </div>
        <TrackHeader name="WAF--lead" height="h-[51px]" rec="rec" />
      </div>
    </div>
  );
}

/* ---------- editor ---------- */

const RULER_ROWS = [
  ["Timecode", null],
  ["Meter", "bg-[#61636f]"],
  ["Tempo", "bg-[#6e707d]"],
  ["Loop/Punch Ranges", "bg-[#898c95]"],
  ["CD Markers", "bg-[#9193a0]"],
  ["Location Markers", "bg-[#979da9]"],
];

function Playhead() {
  return (
    <>
      <div className="pointer-events-none absolute top-[15px] bottom-0 left-[622px] z-20 flex w-[7px] justify-center bg-white/30">
        <div className="w-px bg-[#f00] outline outline-[#f00]/20" />
      </div>
      <svg width="19" height="11" viewBox="0 0 19 11" className="absolute top-[15px] left-[616px] z-20" aria-hidden="true"><path d="M0 0H19L10 11H9Z" fill="#f00" /></svg>
      <svg width="19" height="11" viewBox="0 0 19 11" className="absolute bottom-0 left-[616px] z-20" aria-hidden="true"><path d="M0 11H19L10 0H9Z" fill="#f00" /></svg>
    </>
  );
}

function Editor() {
  return (
    <div className="flex">
      <div className="w-[223px] shrink-0">
        {RULER_ROWS.map(([t]) => (
          <div key={t} className="h-[15px] bg-[#55565f] pr-[5px] text-right text-xs leading-[15px] text-[#ececec]">{t}</div>
        ))}
        <Headers />
      </div>
      <div className="relative min-w-0 flex-1 overflow-hidden">
        <Ruler />
        {RULER_ROWS.slice(1).map(([t, bg]) => (
          <div key={t} className={`h-[15px] border-b border-[#51534f] ${bg}`} />
        ))}
        <WaveLane />
        <FrequencyLane />
        <SnaresLane />
        <BassLane />
        <PluckedLane />
        <GainLane />
        <LeadLane />
        <Playhead />
        <svg width="14" height="22" viewBox="0 0 14 22" className="absolute top-[276px] left-[680px] z-20" aria-hidden="true">
          <path d="M1 1V17L4.800 13.500L7.500 19.500L10 18.300L7.400 12.500H12.500Z" fill="#fff" stroke="#111" />
        </svg>
      </div>
    </div>
  );
}

/* ---------- session overview ---------- */

const STRIPES = [
  [696, "#606060", 2], [699, "#0d1a10", 1], [701, "#1c5a8c", 1], [703, "#6b2b93", 1], [705, "#1c2a20", 1], [707, "#3c5a9a", 1],
  [709, "#222c2a", 1], [711, "#5a2a5a", 1], [713, "#9070a8", 1], [715, "#5a6a48", 1], [717, "#7cae68", 1], [719, "#2a1058", 1],
  [721, "#58707a", 1], [725, "#8a4848", 2], [727, "#2c1058", 2], [729, "#4a6e50", 3], [732, "#3c8878", 1], [733, "#4a6e50", 1],
  [734, "#5e7e50", 1], [736, "#a07080", 1], [738, "#28304a", 2], [740, "#b05a88", 1], [742, "#b028b0", 1], [744, "#222222", 1],
  [746, "#282828", 1], [748, "#806050", 1], [750, "#100068", 1], [752, "#303030", 1], [754, "#8a2410", 1], [756, "#6a7838", 1],
  [758, "#2a2a2a", 1], [760, "#3a3a3a", 1], [762, "#900818", 2], [764, "#8a5890", 2],
];

function Overview() {
  const arrow = "flex flex-1 items-center justify-center rounded-[3px] border border-[#3a3b40] bg-linear-to-b from-[#5d5e67] to-[#4d4e55]";
  const chev = (d) => (
    <svg width="8" height="8" viewBox="0 0 8 8" fill="none" stroke="#b0b1b5" strokeWidth="1.500"><path d={d} /></svg>
  );
  return (
    <div className="flex flex-1 flex-col">
      <svg height="4" width="100%" className="block" aria-hidden="true">
        <path d="M608 1.500h47M608 3.500h47" stroke="#333" strokeDasharray="1 2" />
      </svg>
      <div className="flex min-h-[76px] flex-1">
        <div className="flex w-[23px] flex-col">
          <button aria-label="Scroll left" className={arrow}>{chev("M5.500 1L2.500 4L5.500 7")}</button>
          <button aria-label="Scroll right" className={arrow}>{chev("M2.500 1L5.500 4L2.500 7")}</button>
        </div>
        <div className="ml-px min-w-0 flex-1 border border-[#6a6b70] bg-[#161616]">
          <svg width="100%" height="74" viewBox="121 693 1215 74" preserveAspectRatio="none" className="block" role="img" aria-label="Session overview">
            <rect x="121" y="693" width="1215" height="74" fill="#101010" />
            {Array.from({ length: 34 }, (_, i) => <rect key={i} x="1247" y={697 + i * 2} width="90" height="1" fill="#242424" />)}
            <rect x="121" y="698" width="1126" height="69" fill="#0a0a0a" />
            {STRIPES.map(([y, c, h]) => <rect key={y} x="121" y={y} width="1126" height={h} fill={c} />)}
            <path d="M121 724H304M484 724H547M727 724H791M1124 724H1190" stroke="#775518" strokeWidth="2" />
            <path d="M538 709.5H554M1116 709.5H1133" stroke="#0c1270" />
            <path d="M182 746.5h8M243 746.5h8M288 746.5h8" stroke="#7a8a18" />
            <path d="M547 761H978" stroke="#9a5a58" strokeWidth="2" />
            <rect x="1247" y="764" width="8" height="2" fill="#8a5890" />
            <rect x="527.500" y="756.500" width="135" height="9" fill="#fff" fillOpacity=".35" stroke="#ddd" />
            <path d="M608.500 693V767" stroke="#e00000" />
            <path d="M1224.500 693V767" stroke="#f0e800" />
            <path d="M121.500 693V767" stroke="#9a9a30" />
          </svg>
        </div>
        <div className="flex w-[23px] flex-col">
          <button aria-label="Zoom overview up" className={arrow}>{chev("M1 5.500L4 2.500L7 5.500")}</button>
          <button aria-label="Zoom overview down" className={arrow}>{chev("M1 2.500L4 5.500L7 2.500")}</button>
        </div>
      </div>
    </div>
  );
}

export default function App() {
  return (
    <div className="flex min-h-screen flex-col bg-[#54555d] font-['Noto_Sans','Open_Sans',sans-serif] text-[13px]">
      <MenuBar />
      <Transport />
      <main className="flex flex-1 pt-px">
        <MixerStrip />
        <div className="flex min-w-0 flex-1 flex-col">
          <EditBar />
          <div className="h-0.5 bg-[#3d3e43]" />
          <Editor />
          <Overview />
        </div>
      </main>
    </div>
  );
}
